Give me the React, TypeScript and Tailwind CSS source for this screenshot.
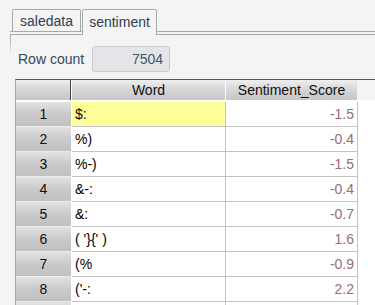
import React from 'react';

const rows = [
  { n: 1, word: '$:', score: '-1.5' },
  { n: 2, word: '%)', score: '-0.4' },
  { n: 3, word: '%-)', score: '-1.5' },
  { n: 4, word: '&-:', score: '-0.4' },
  { n: 5, word: '&:', score: '-0.7' },
  { n: 6, word: "( '}{' )", score: '1.6' },
  { n: 7, word: '(%', score: '-0.9' },
  { n: 8, word: "('-:", score: '2.2' },
];

function App() {
  return (
    <div className="w-[375px] h-[305px] overflow-hidden bg-[#f3f4f3] font-['Liberation_Sans',Arial,sans-serif] text-[14px]">
      {/* Tabs */}
      <div className="ml-[10px] flex items-end h-[32px] border-b border-[#a3abad] pl-[2px] gap-[1px]">
        <div className="h-[22px] w-[69px] border border-b-0 border-[#a3abad] rounded-t-[2px] bg-[#f3f4f3] flex items-center justify-center text-[#2e3d4f] leading-none">
          saledata
        </div>
        <div className="relative z-10 h-[26px] -mb-[4px] w-[75px] border border-b-0 border-[#a3abad] rounded-t-[2px] bg-[#f3f4f3] flex items-start pt-[5px] justify-center text-[#2e3d4f] leading-none">
          sentiment
        </div>
      </div>

      {/* Panel */}
      <div className="ml-[10px] mt-[2px] border-t border-[#a3abad] flex">
        <div className="w-px h-[22px] bg-gradient-to-b from-[#a3abad] to-[#f3f4f3] shrink-0" />
        <div className="flex-1">
          <div className="flex items-center pl-[7px] pt-[11px] gap-[8px]">
            <span className="text-[#36475a] leading-none">Row count</span>
            <div className="w-[78px] h-[26px] rounded-[3px] border border-[#c6cace] bg-[#e3e5e9] flex items-center justify-end pr-[6px] text-[#44546a] leading-none">
              7504
            </div>
          </div>

          {/* Table */}
          <div className="ml-[4px] mt-[7px] border-t border-l border-t-[#555555] border-l-[#a8a8a8] bg-white">
            <div className="flex h-[22px] bg-white">
              <div className="w-[55px] h-[20px] border-r border-[#404040] bg-gradient-to-b from-[#efefef] via-[#d6d6d6] to-[#c6c6c6]" />
              <div className="w-px" />
              <div className="w-[153px] h-[20px] bg-gradient-to-b from-[#efefef] via-[#d6d6d6] to-[#c6c6c6] flex items-center justify-center text-[#111] leading-none">
                Word
              </div>
              <div className="w-px" />
              <div className="w-[131px] h-[20px] bg-gradient-to-b from-[#efefef] via-[#d6d6d6] to-[#c6c6c6] flex items-center justify-center text-[#111] leading-none">
                Sentiment_Score
              </div>
              <div className="flex-1 h-[20px] bg-[#f4f4f4]" />
            </div>

            {rows.map((r) => (
              <div key={r.n} className="flex h-[25px]">
                <div className="w-[55px] h-full border-b border-[#ececec] bg-gradient-to-b from-[#e2e2e2] via-[#cacaca] to-[#c0c0c0] flex items-center justify-center text-[#111] leading-none">
                  {r.n}
                </div>
                <div className="w-px" />
                <div
                  className={
                    r.n === 1
                      ? 'w-[154px] h-full border-r border-b border-[#c4c4c4] bg-[#ffff99] flex items-center pl-[3px] text-black leading-none'
                      : 'w-[154px] h-full border-r border-b border-[#c4c4c4] bg-white flex items-center pl-[3px] text-black leading-none'
                  }
                >
                  {r.word}
                </div>
                <div className="w-[132px] h-full border-r border-b border-[#c4c4c4] flex items-center justify-end pr-[3px] text-[#9a6c72] leading-none">
                  {r.score}
                </div>
                <div className="flex-1" />
              </div>
            ))}

            {/* next row, only its top edge shows */}
            <div className="flex h-[25px]">
              <div className="w-[55px] h-full bg-gradient-to-b from-[#e2e2e2] via-[#cacaca] to-[#c0c0c0]" />
              <div className="w-px" />
              <div className="w-[154px] h-full border-r border-[#c4c4c4]" />
              <div className="w-[132px] h-full border-r border-[#c4c4c4]" />
              <div className="flex-1" />
            </div>
          </div>
        </div>
      </div>
    </div>
  );
}

export default App;
